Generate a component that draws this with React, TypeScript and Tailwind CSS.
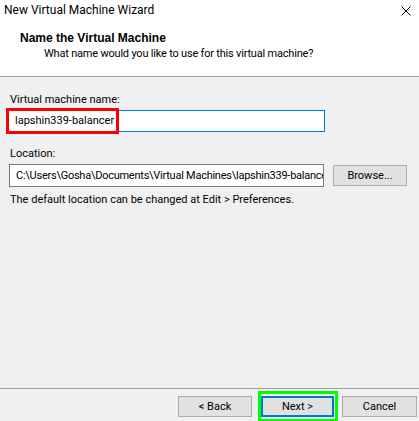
import React from "react";

function WinButton({ children, primary = false, w }: { children: React.ReactNode; primary?: boolean; w: string }) {
  return (
    <button
      className={
        "h-[21px] bg-[#e1e1e1] flex items-center justify-center leading-[16px] text-black " +
        w +
        (primary ? " border-2 border-[#0078d7]" : " border border-[#adadad]")
      }
    >
      {children}
    </button>
  );
}

export default function App() {
  return (
    <div className="relative w-[419px] h-[421px] overflow-hidden bg-[#f0f0f0] text-[11px] text-black flex flex-col font-['Roboto',sans-serif]">
      {/* Header */}
      <div className="h-[77px] shrink-0 bg-white border-b border-[#a0a0a0] flex flex-col">
        <div className="flex items-start justify-between pl-[4px] pr-[8px] pt-[2px]">
          <span className="text-[12px] leading-[16px]">New Virtual Machine Wizard</span>
          <svg width="10" height="10" viewBox="0 0 10 10" className="mt-[4px]">
            <path d="M0.5 0.5 L9.5 9.5 M9.5 0.5 L0.5 9.5" stroke="#000" strokeWidth="1" />
          </svg>
        </div>
        <div className="pl-[20px] mt-[13px] font-bold text-[12px] leading-[14px] font-['Liberation_Sans',sans-serif]">
          Name the Virtual Machine
        </div>
        <div className="pl-[44px] mt-[1px] leading-[16px] tracking-[-0.2px]">
          What name would you like to use for this virtual machine?
        </div>
      </div>

      {/* Body */}
      <div className="relative flex-1 flex flex-col px-[8px] pt-[15px]">
        <div className="pl-[2px] leading-[16px]">Virtual machine name:</div>
        <div className="mt-[2px] h-[22px] w-[317px] bg-white border border-[#0078d7] flex items-center pl-[6px] leading-[16px]">
          lapshin339-balancer
        </div>

        <div className="pl-[2px] mt-[14px] leading-[16px]">Location:</div>
        <div className="mt-[2px] flex items-center gap-[9px] pl-[1px]">
          <div className="h-[23px] w-[315px] bg-white border border-[#7a7a7a] flex items-center pl-[6px] overflow-hidden whitespace-nowrap leading-[16px] tracking-[-0.25px]">
            C:\Users\Gosha\Documents\Virtual Machines\lapshin339-balancer
          </div>
          <WinButton w="w-[74px]">Browse...</WinButton>
        </div>

        <div className="pl-[2px] mt-[5px] leading-[16px]">
          The default location can be changed at Edit &gt; Preferences.
        </div>

        {/* red annotation */}
        <div className="absolute left-[6px] top-[31px] w-[113px] h-[26px] border-[3px] border-[#ff0000] pointer-events-none" />
      </div>

      {/* Footer */}
      <div className="relative h-[33px] shrink-0 border-t border-[#a0a0a0] flex items-start justify-end pt-[7px] pr-[2px] gap-[8px]">
        <WinButton w="w-[74px]">&lt; Back</WinButton>
        <div className="flex gap-[8px] pl-[1px]">
          <WinButton primary w="w-[73px]">Next &gt;</WinButton>
          <WinButton w="w-[75px]">Cancel</WinButton>
        </div>
        {/* green annotation */}
        <div className="absolute left-[258px] top-[2px] w-[80px] h-[31px] border-[3px] border-[#00ff00] pointer-events-none" />
      </div>
    </div>
  );
}
